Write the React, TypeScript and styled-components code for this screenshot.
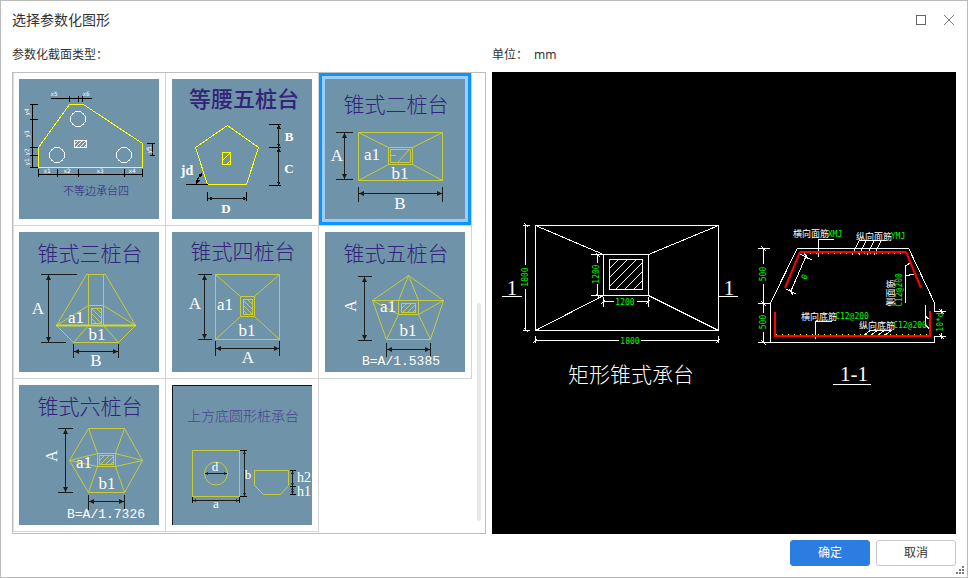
import React, { useId, useState } from "react";
import styled, { createGlobalStyle, css } from "styled-components";

const UI_FONT = '"Noto Sans", "Noto Sans CJK SC", sans-serif';

const GlobalStyle = createGlobalStyle`
  * { box-sizing: border-box; }
  body { margin: 0; background: #fff; font-family: ${UI_FONT}; color: #333; }
  button { font: inherit; color: inherit; }
`;

/* ---------- window chrome ---------- */

const Dialog = styled.main`
  position: relative;
  display: flex;
  flex-direction: column;
  min-height: 100vh;
  border: 1px solid #bbb;
  background: #fff;
`;

const TitleBar = styled.header`
  display: flex;
  align-items: center;
  justify-content: space-between;
  height: 38px;
  padding: 0 4px 0 11px;
`;

const Title = styled.h1`
  margin: 0;
  font-size: 14px;
  font-weight: 400;
  line-height: 20px;
`;

const WindowButtons = styled.div`
  display: flex;
`;

const WindowButton = styled.button`
  display: flex;
  align-items: center;
  justify-content: center;
  width: 28px;
  height: 28px;
  padding: 0;
  border: 0;
  background: transparent;
`;

const Body = styled.div`
  display: flex;
  flex: 1;
  gap: 6px;
  padding: 0 11px;
`;

const Column = styled.section<{ $grow?: boolean }>`
  display: flex;
  flex-direction: column;
  flex: ${(p) => (p.$grow ? "1 1 0" : "0 0 auto")};
  min-width: 0;
`;

const ColumnLabel = styled.div`
  display: flex;
  gap: 6px;
  height: 33px;
  font-size: 12px;
  line-height: 32px;
`;

const Footer = styled.footer`
  display: flex;
  justify-content: flex-end;
  gap: 6px;
  padding: 6px 11px 11px;
`;

const ActionButton = styled.button<{ $primary?: boolean }>`
  width: 80px;
  height: 26px;
  padding: 0;
  border: 1px solid ${(p) => (p.$primary ? "#2b7de1" : "#c8c8c8")};
  border-radius: 3px;
  background: ${(p) => (p.$primary ? "#2b7de1" : "#fff")};
  color: ${(p) => (p.$primary ? "#fff" : "#333")};
  font-size: 12px;
  line-height: 24px;
`;

const Grip = styled.svg`
  position: absolute;
  right: 3px;
  bottom: 3px;
`;

/* ---------- shape list ---------- */

const ListPanel = styled.div`
  display: flex;
  flex: 1;
  border: 1px solid #bebebe;
`;

const ShapeGrid = styled.div`
  display: grid;
  grid-template-columns: repeat(3, auto);
  align-content: start;
  align-self: flex-start;
  box-shadow: inset 1px 0 0 #dcdcdc;
`;

const ShapeCell = styled.div`
  padding: 6px;
  border-right: 1px solid #d4d4d4;
  border-bottom: 1px solid #d4d4d4;
`;

const ShapeButton = styled.button<{ $selected: boolean }>`
  display: block;
  padding: 0;
  border: 0;
  background: #6f93a9;
  ${(p) =>
    p.$selected &&
    css`
      box-shadow: 0 0 0 3px #99ccff, 0 0 0 6px #0e94ff;
    `}
`;

const ThumbSvg = styled.svg<{ $crisp?: boolean }>`
  display: block;
  width: 140px;
  height: 140px;
  fill: none;
  shape-rendering: ${(p) => (p.$crisp ? "crispEdges" : "auto")};
`;

const ScrollTrack = styled.div`
  display: flex;
  flex-direction: column;
  justify-content: flex-end;
  width: 13px;
  padding: 0 4px 12px 5px;
`;

const ScrollThumb = styled.div`
  height: 218px;
  border-radius: 2px;
  background: #e8e8e8;
`;

/* ---------- drawing text ---------- */

const Heading = styled.text<{ $size: number; $bold?: boolean; $soft?: boolean }>`
  font-family: "Noto Sans CJK SC", sans-serif;
  font-size: ${(p) => p.$size}px;
  font-weight: ${(p) => (p.$bold ? 500 : 300)};
  fill: ${(p) => (p.$soft ? "#4b4590" : "#33237a")};
  text-anchor: middle;
`;

const Letter = styled.text<{ $size?: number; $bold?: boolean }>`
  font-family: "Liberation Serif", serif;
  font-size: ${(p) => p.$size ?? 17}px;
  font-weight: ${(p) => (p.$bold ? 700 : 400)};
  fill: #fff;
  text-anchor: middle;
`;

const Formula = styled.text`
  font-family: "Liberation Mono", monospace;
  font-size: 13px;
  fill: #fff;
`;

const Micro = styled.text`
  font-family: "DejaVu Sans Mono", monospace;
  font-size: 6px;
  fill: #fff;
  text-anchor: middle;
`;

const DimText = styled.text`
  font-family: "DejaVu Sans Mono", monospace;
  font-size: 8px;
  fill: #00ff00;
  text-anchor: middle;
`;

const BarText = styled.text`
  font-family: "Noto Sans CJK SC", sans-serif;
  font-size: 9px;
  fill: #fff;
  text-anchor: middle;
`;

const Caption = styled.text`
  font-family: "Liberation Serif", "Noto Sans CJK SC", serif;
  font-size: 21px;
  font-weight: 300;
  fill: #fff;
  text-anchor: middle;
`;

/* ---------- drawing helpers ---------- */

type Box = [number, number, number, number];

const BLACK = "#1c1c1c";
const YELLOW = "#ffff00";
const OLIVE = "#c6cc3a";

function Hatch({ box, step, color }: { box: Box; step: number; color: string }) {
  const id = useId();
  const [x, y, w, h] = box;
  const lines: string[] = [];
  for (let d = step; d < w + h; d += step) {
    lines.push(`M${x} ${y + d}L${x + d} ${y}`);
  }
  return (
    <g stroke={color}>
      <clipPath id={id}>
        <rect x={x} y={y} width={w} height={h} />
      </clipPath>
      <path d={lines.join("")} clipPath={`url(#${id})`} />
      <rect x={x} y={y} width={w} height={h} />
    </g>
  );
}

function ArrowLine({ x1, y1, x2, y2, size = 5 }: { x1: number; y1: number; x2: number; y2: number; size?: number }) {
  const s = size;
  const half = s / 2;
  const heads =
    x1 === x2
      ? `M${x1} ${y1}l${half} ${s}h${-s}zM${x2} ${y2}l${half} ${-s}h${-s}z`
      : `M${x1} ${y1}l${s} ${half}v${-s}zM${x2} ${y2}l${-s} ${half}v${-s}z`;
  return (
    <g>
      <path d={`M${x1} ${y1}L${x2} ${y2}`} stroke={BLACK} />
      <path d={heads} fill={BLACK} />
    </g>
  );
}

function Side({ x, y, children }: { x: number; y: number; children: React.ReactNode }) {
  return <g transform={`translate(${x} ${y}) rotate(-90)`}>{children}</g>;
}

/* ---------- thumbnails ---------- */

function UnequalFour() {
  return (
    <ThumbSvg viewBox="0 0 140 140" $crisp>
      <path
        stroke="#000"
        d="M32 19.5H73M50.5 17v6M59.5 17v6M63.5 17v6M13.5 25.5v63M11 25.5h8M11 40.5h8M11 68.5h8M11 76.5h8M11 88.5h8M19.5 95.5h104M19.5 90v8M38.5 90v8M59.5 90v8M105.5 90v8M123.5 90v8M133.5 64.5v12M128 64.5h8M131 76.5h5"
      />
      <path stroke={YELLOW} d="M50.5 25.5h14l59 39v24h-104v-20z" />
      <g stroke="#fff">
        <circle cx="59" cy="40" r="7.5" />
        <circle cx="38" cy="76" r="7.5" />
        <circle cx="105" cy="76" r="7.5" />
      </g>
      <Hatch box={[55.5, 61.5, 12, 7]} step={4} color="#fff" />
      <Micro x="28" y="94">x1</Micro>
      <Micro x="48" y="94">x2</Micro>
      <Micro x="81" y="94">x3</Micro>
      <Micro x="113" y="94">x4</Micro>
      <Micro x="35" y="17">x5</Micro>
      <Micro x="67" y="17">x6</Micro>
      <Side x={10} y={33}><Micro>y4</Micro></Side>
      <Side x={10} y={55}><Micro>y3</Micro></Side>
      <Side x={10} y={73}><Micro>y2</Micro></Side>
      <Side x={10} y={83}><Micro>y1</Micro></Side>
      <Side x={132} y={71}><Micro>y5</Micro></Side>
      <Heading x="77" y="116" $size={11}>不等边承台四</Heading>
    </ThumbSvg>
  );
}

function IsoscelesFive() {
  return (
    <ThumbSvg viewBox="0 0 140 140" $crisp>
      <Heading x="72" y="28" $size={22} $bold>等腰五桩台</Heading>
      <path stroke={YELLOW} d="M55.5 46.5l31 22l-12 37h-39l-12-37z" />
      <Hatch box={[50.5, 73.5, 8, 12]} step={8} color={YELLOW} />
      <path stroke="#000" d="M97 45.5h12M97 68.5h12M97 106.5h12M35.5 113v9M74.5 113v9M14 105.5h22M24.5 105q0-6 5-9" />
      <path fill="#000" d="M30 94l-4 2l3 3zM24 105l4-4h-4z" />
      <ArrowLine x1={106.5} y1={45.5} x2={106.5} y2={68.5} size={4} />
      <ArrowLine x1={106.5} y1={68.5} x2={106.5} y2={106.5} size={4} />
      <ArrowLine x1={35.5} y1={119.5} x2={74.5} y2={119.5} size={4} />
      <Letter x="117" y="62" $size={13} $bold>B</Letter>
      <Letter x="117" y="94" $size={13} $bold>C</Letter>
      <Letter x="54" y="134" $size={13} $bold>D</Letter>
      <Letter x="15" y="96" $size={14} $bold>jd</Letter>
    </ThumbSvg>
  );
}

function TaperTwo() {
  return (
    <ThumbSvg viewBox="0 0 140 140">
      <Heading x="71" y="33" $size={21}>锥式二桩台</Heading>
      <path
        stroke={OLIVE}
        d="M33.500 53.500h84v48h-84zM63.500 68.500h24v17h-24zM65.500 70.500h20v13h-20zM33.500 53.500l30 15M117.500 53.500l-30 15M33.500 101.500l30-16M117.500 101.500l-30-16M73 83l11-12M66 76.500h5"
      />
      <path stroke={BLACK} d="M11 53.500h17M11 100.500h17M33.500 108v15M117.500 108v15" />
      <ArrowLine x1={19.5} y1={54} x2={19.5} y2={100} />
      <ArrowLine x1={34} y1={114.5} x2={117} y2={114.5} />
      <Letter x="12" y="82">A</Letter>
      <Letter x="47" y="81">a1</Letter>
      <Letter x="75" y="100">b1</Letter>
      <Letter x="75" y="130">B</Letter>
    </ThumbSvg>
  );
}

function TaperThree() {
  return (
    <ThumbSvg viewBox="0 0 140 140">
      <Heading x="71" y="29" $size={21}>锥式三桩台</Heading>
      <path
        stroke={OLIVE}
        d="M67.500 42.500h19l30 51l-17 17h-45l-17-17zM69.500 42.500v51M84.500 42.500v51M69.500 73.500h15M69.500 73.500l-32 20M84.500 73.500l32 20M69.500 93.500l-15 17M84.500 93.500l15 17"
      />
      <path stroke="#d4dc1c" strokeWidth="2" d="M37 93.500h80" />
      <g transform="translate(155 0) scale(-1 1)">
        <Hatch box={[72.5, 76.5, 10, 15]} step={5} color={OLIVE} />
      </g>
      <path stroke={BLACK} d="M22 42.500h36M22 110.500h25M54.500 112v14M99.500 112v14" />
      <ArrowLine x1={29.5} y1={43} x2={29.5} y2={110} />
      <ArrowLine x1={55} y1={119.5} x2={99} y2={119.5} />
      <Letter x="19" y="82">A</Letter>
      <Letter x="57" y="91">a1</Letter>
      <Letter x="78" y="108">b1</Letter>
      <Letter x="77" y="134">B</Letter>
    </ThumbSvg>
  );
}

function TaperFour() {
  return (
    <ThumbSvg viewBox="0 0 140 140">
      <Heading x="71" y="27" $size={21}>锥式四桩台</Heading>
      <path
        stroke={OLIVE}
        d="M43.500 42.500h64v65h-64zM68.500 64.500h14v20h-14zM43.500 42.500l25 22M107.500 42.500l-25 22M43.500 107.500l25-23M107.500 107.500l-25-23"
      />
      <g transform="translate(152 0) scale(-1 1)">
        <Hatch box={[71.5, 67.5, 9, 15]} step={5} color={OLIVE} />
      </g>
      <path stroke={BLACK} d="M26 42.500h14M26 107.500h14M43.500 109v15M107.500 109v15" />
      <ArrowLine x1={32.5} y1={43} x2={32.5} y2={107} />
      <ArrowLine x1={44} y1={116.500} x2={107} y2={116.500} />
      <Letter x="23" y="77">A</Letter>
      <Letter x="53" y="78">a1</Letter>
      <Letter x="75" y="104">b1</Letter>
      <Letter x="76" y="131">A</Letter>
    </ThumbSvg>
  );
}

function TaperFive() {
  return (
    <ThumbSvg viewBox="0 0 140 140">
      <Heading x="71" y="29" $size={21}>锥式五桩台</Heading>
      <path
        stroke={OLIVE}
        d="M83.500 43.500l35 25l-13 39h-44l-14-39zM47.500 68.500h71M73.500 68.500v14h20v-14M83.500 43.500l-10 25M83.500 43.500l10 25M47.500 68.500l26 14M118.500 68.500l-25 14M61.500 107.500l12-25M105.500 107.500l-12-25"
      />
      <Hatch box={[76.5, 71.5, 14, 9]} step={5} color={OLIVE} />
      <path stroke={BLACK} d="M33 44.500h14M33 108.500h14M61.500 111v14M105.500 111v14" />
      <ArrowLine x1={39.5} y1={45} x2={39.5} y2={108} />
      <ArrowLine x1={62} y1={117.5} x2={105} y2={117.5} />
      <Side x={31} y={74}><Letter $size={16}>A</Letter></Side>
      <Letter x="63" y="80">a1</Letter>
      <Letter x="83" y="104">b1</Letter>
      <Formula x="37" y="133">B=A/1.5385</Formula>
    </ThumbSvg>
  );
}

function TaperSix() {
  return (
    <ThumbSvg viewBox="0 0 140 140">
      <Heading x="71" y="29" $size={21}>锥式六桩台</Heading>
      <path
        stroke={OLIVE}
        d="M69.500 43.500h36l18 32l-18 32h-36l-19-32zM78.500 68.500h18v13h-18zM69.500 43.500l9 25M105.500 43.500l-9 25M69.500 107.500l9-26M105.500 107.500l-9-26M78.500 68.500l-28 7l28 6M96.500 68.500l27 7l-27 6"
      />
      <Hatch box={[80.5, 70.5, 14, 9]} step={5} color={OLIVE} />
      <path stroke={BLACK} d="M39 43.500h15M39 107.500h15M69.500 110v15M105.500 110v15" />
      <ArrowLine x1={46.5} y1={44} x2={46.5} y2={107} />
      <ArrowLine x1={70} y1={116.5} x2={105} y2={116.5} />
      <Side x={38} y={71}><Letter $size={16}>A</Letter></Side>
      <Letter x="65" y="83">a1</Letter>
      <Letter x="88" y="104">b1</Letter>
      <Formula x="48" y="133">B=A/1.7326</Formula>
    </ThumbSvg>
  );
}

function RoundPile() {
  return (
    <ThumbSvg viewBox="0 0 140 140">
      <path stroke="#101418" d="M0.500 140V0.500H140" />
      <Heading x="71" y="36" $size={14} $soft>上方底圆形桩承台</Heading>
      <g stroke={OLIVE}>
        <path d="M20.500 65.500h47v46h-47zM82.500 85.500h34v15l-8 9h-17l-9-9z" />
        <circle cx="44" cy="88.500" r="11.500" />
      </g>
      <path
        stroke="#000"
        d="M68 65.500h7M68 111.500h7M20.500 112v6M67.500 112v6M118 85.500h6M118 101.500h6M118 109.500h6"
      />
      <ArrowLine x1={33} y1={88.5} x2={55} y2={88.5} size={3} />
      <ArrowLine x1={72.5} y1={66} x2={72.5} y2={111} size={3} />
      <ArrowLine x1={21} y1={115.5} x2={67} y2={115.5} size={3} />
      <ArrowLine x1={120.5} y1={86} x2={120.5} y2={101} size={3} />
      <ArrowLine x1={120.5} y1={102} x2={120.5} y2={109} size={3} />
      <Letter x="43" y="86" $size={13}>d</Letter>
      <Letter x="76" y="94" $size={13}>b</Letter>
      <Letter x="44" y="123" $size={13}>a</Letter>
      <Letter x="132" y="97" $size={14}>h2</Letter>
      <Letter x="132" y="111" $size={14}>h1</Letter>
    </ThumbSvg>
  );
}

/* ---------- preview drawing ---------- */

const Preview = styled.div`
  display: flex;
  flex: 1;
  align-items: center;
  justify-content: center;
  background: #000;
`;

const PreviewSvg = styled.svg`
  display: block;
  width: 100%;
  height: auto;
  max-height: 100vh;
  fill: none;
  shape-rendering: crispEdges;
`;

function PlanView() {
  return (
    <g>
      <g stroke="#fff">
        <path d="M43.500 153.500h183v105h-183zM111.500 182.500h45v41h-45zM43.500 153.500l68 29M226.500 153.500l-70 29M43.500 258.500l68-35M226.500 258.500l-70-35" />
        <path d="M33.500 153v40M33.500 217v42M31 153.500h7M31 258.500h7M32 151l4 4M32 256l4 4" />
        <path d="M105.500 182v9M105.500 212v12M99 182.500h12M99 223.500h12M104 181l4 4M104 222l4 4" />
        <path d="M111.500 225v10M156.500 225v10M111 229.500h11M145 229.500h12M109 232l4-4M154 232l4-4" />
        <path d="M43.500 264v7M226.500 264v7M43 268.500h84M149 268.500h78M41 271l4-4M224 271l4-4" />
        <path d="M10 224.500h20M227 224.500h19" />
      </g>
      <Hatch box={[117.5, 187.5, 33, 30]} step={9} color="#fff" />
      <Side x={36} y={205}><DimText>1800</DimText></Side>
      <Side x={107} y={202}><DimText>1200</DimText></Side>
      <DimText x="133" y="233">1200</DimText>
      <DimText x="138" y="272">1800</DimText>
      <Caption x="20" y="223">1</Caption>
      <Caption x="237" y="223">1</Caption>
      <Caption x="139" y="310">矩形锥式承台</Caption>
    </g>
  );
}

function SectionView() {
  return (
    <g>
      <g stroke="#fff">
        <path d="M442.500 239v-8l-26-55h-111l-27 55v39h164v-6" />
        <path d="M271.500 176v16M271.500 212v29M271.500 260v11M266 176.500h12M266 231.500h12M266 270.500h12M269 174l5 5M269 229l5 5M269 268l5 5" />
        <path d="M342 167.500h-15.500V185" />
        <path d="M367 168.500h27M367 169l-7 14M374 169l-7 14M382 169l-7 14M389 169l-7 14" />
        <path d="M314.500 183l-16 37M308 182l12 6M294 217l10 5M312 181l4 6M297 217l4 6" />
        <path d="M418 191l-4.500 3V231M413.500 204l8-2" />
        <path d="M340 249.500h-16.500V267" />
        <path d="M400 258.500h-22M379 258l-8 6M386 258l-8 6M393 258l-8 6M400 258l-8 6" />
        <path d="M433.500 233v20l4 4M433 244l4 3" />
        <path d="M442 239.500h12M442 264.500h12M449.500 237v5M449.500 261v6M447 237l5 5M447 262l5 5" />
        <path d="M341 312.500h38" />
      </g>
      <path stroke={YELLOW} strokeDasharray="1 5" d="M312 181.500h100M284 262.500h154" />
      <path stroke="#f00" strokeWidth="2" d="M308 180h106M283 240v24h155v-25" />
      <path stroke="#f00" strokeWidth="2" d="M293 216l15-36M414 180l15 36" shapeRendering="auto" />
      <BarText x="319" y="165">横向面筋</BarText>
      <DimText x="343" y="165">XMJ</DimText>
      <BarText x="382" y="168">纵向面筋</BarText>
      <DimText x="406" y="167">YMJ</DimText>
      <Side x={274} y={202}><DimText>500</DimText></Side>
      <Side x={274} y={250}><DimText>500</DimText></Side>
      <g transform="translate(315 206) rotate(-65)"><DimText>0</DimText></g>
      <Side x={402} y={221}><BarText>侧面筋</BarText></Side>
      <Side x={410} y={218}><DimText>C12@200</DimText></Side>
      <BarText x="327" y="248">横向底筋</BarText>
      <DimText x="360" y="247">C12@200</DimText>
      <BarText x="385" y="257">纵向底筋</BarText>
      <DimText x="418" y="256">C12@200</DimText>
      <Side x={451} y={250}><DimText>10*d</DimText></Side>
      <Caption x="362" y="309">1-1</Caption>
    </g>
  );
}

/* ---------- page ---------- */

const SHAPES = [
  { name: "不等边承台四", Drawing: UnequalFour },
  { name: "等腰五桩台", Drawing: IsoscelesFive },
  { name: "锥式二桩台", Drawing: TaperTwo },
  { name: "锥式三桩台", Drawing: TaperThree },
  { name: "锥式四桩台", Drawing: TaperFour },
  { name: "锥式五桩台", Drawing: TaperFive },
  { name: "锥式六桩台", Drawing: TaperSix },
  { name: "上方底圆形桩承台", Drawing: RoundPile },
];

export default function App() {
  const [selected, setSelected] = useState(2);
  return (
    <>
      <GlobalStyle />
      <Dialog>
        <TitleBar>
          <Title>选择参数化图形</Title>
          <WindowButtons>
            <WindowButton aria-label="最大化">
              <svg width="10" height="10" fill="none" stroke="#666">
                <rect x="0.5" y="0.5" width="9" height="9" />
              </svg>
            </WindowButton>
            <WindowButton aria-label="关闭">
              <svg width="12" height="12" fill="none" stroke="#777">
                <path d="M1 1l10 10M11 1l-10 10" />
              </svg>
            </WindowButton>
          </WindowButtons>
        </TitleBar>
        <Body>
          <Column>
            <ColumnLabel id="shape-label">参数化截面类型：</ColumnLabel>
            <ListPanel>
              <ShapeGrid role="group" aria-labelledby="shape-label">
                {SHAPES.map(({ name, Drawing }, i) => (
                  <ShapeCell key={name}>
                    <ShapeButton
                      aria-label={name}
                      aria-pressed={i === selected}
                      $selected={i === selected}
                      onClick={() => setSelected(i)}
                    >
                      <Drawing />
                    </ShapeButton>
                  </ShapeCell>
                ))}
              </ShapeGrid>
              <ScrollTrack>
                <ScrollThumb />
              </ScrollTrack>
            </ListPanel>
          </Column>
          <Column $grow>
            <ColumnLabel>
              <span>单位：</span>
              <span>mm</span>
            </ColumnLabel>
            <Preview>
              <PreviewSvg viewBox="0 0 464 462" role="img" aria-label="矩形锥式承台">
                <PlanView />
                <SectionView />
              </PreviewSvg>
            </Preview>
          </Column>
        </Body>
        <Footer>
          <ActionButton $primary>确定</ActionButton>
          <ActionButton>取消</ActionButton>
        </Footer>
        <Grip width="8" height="8" fill="#777c85" aria-hidden="true">
          <path d="M6 0h2v2h-2zM3 3h2v2h-2zM6 3h2v2h-2zM0 6h2v2h-2zM3 6h2v2h-2zM6 6h2v2h-2z" />
        </Grip>
      </Dialog>
    </>
  );
}
